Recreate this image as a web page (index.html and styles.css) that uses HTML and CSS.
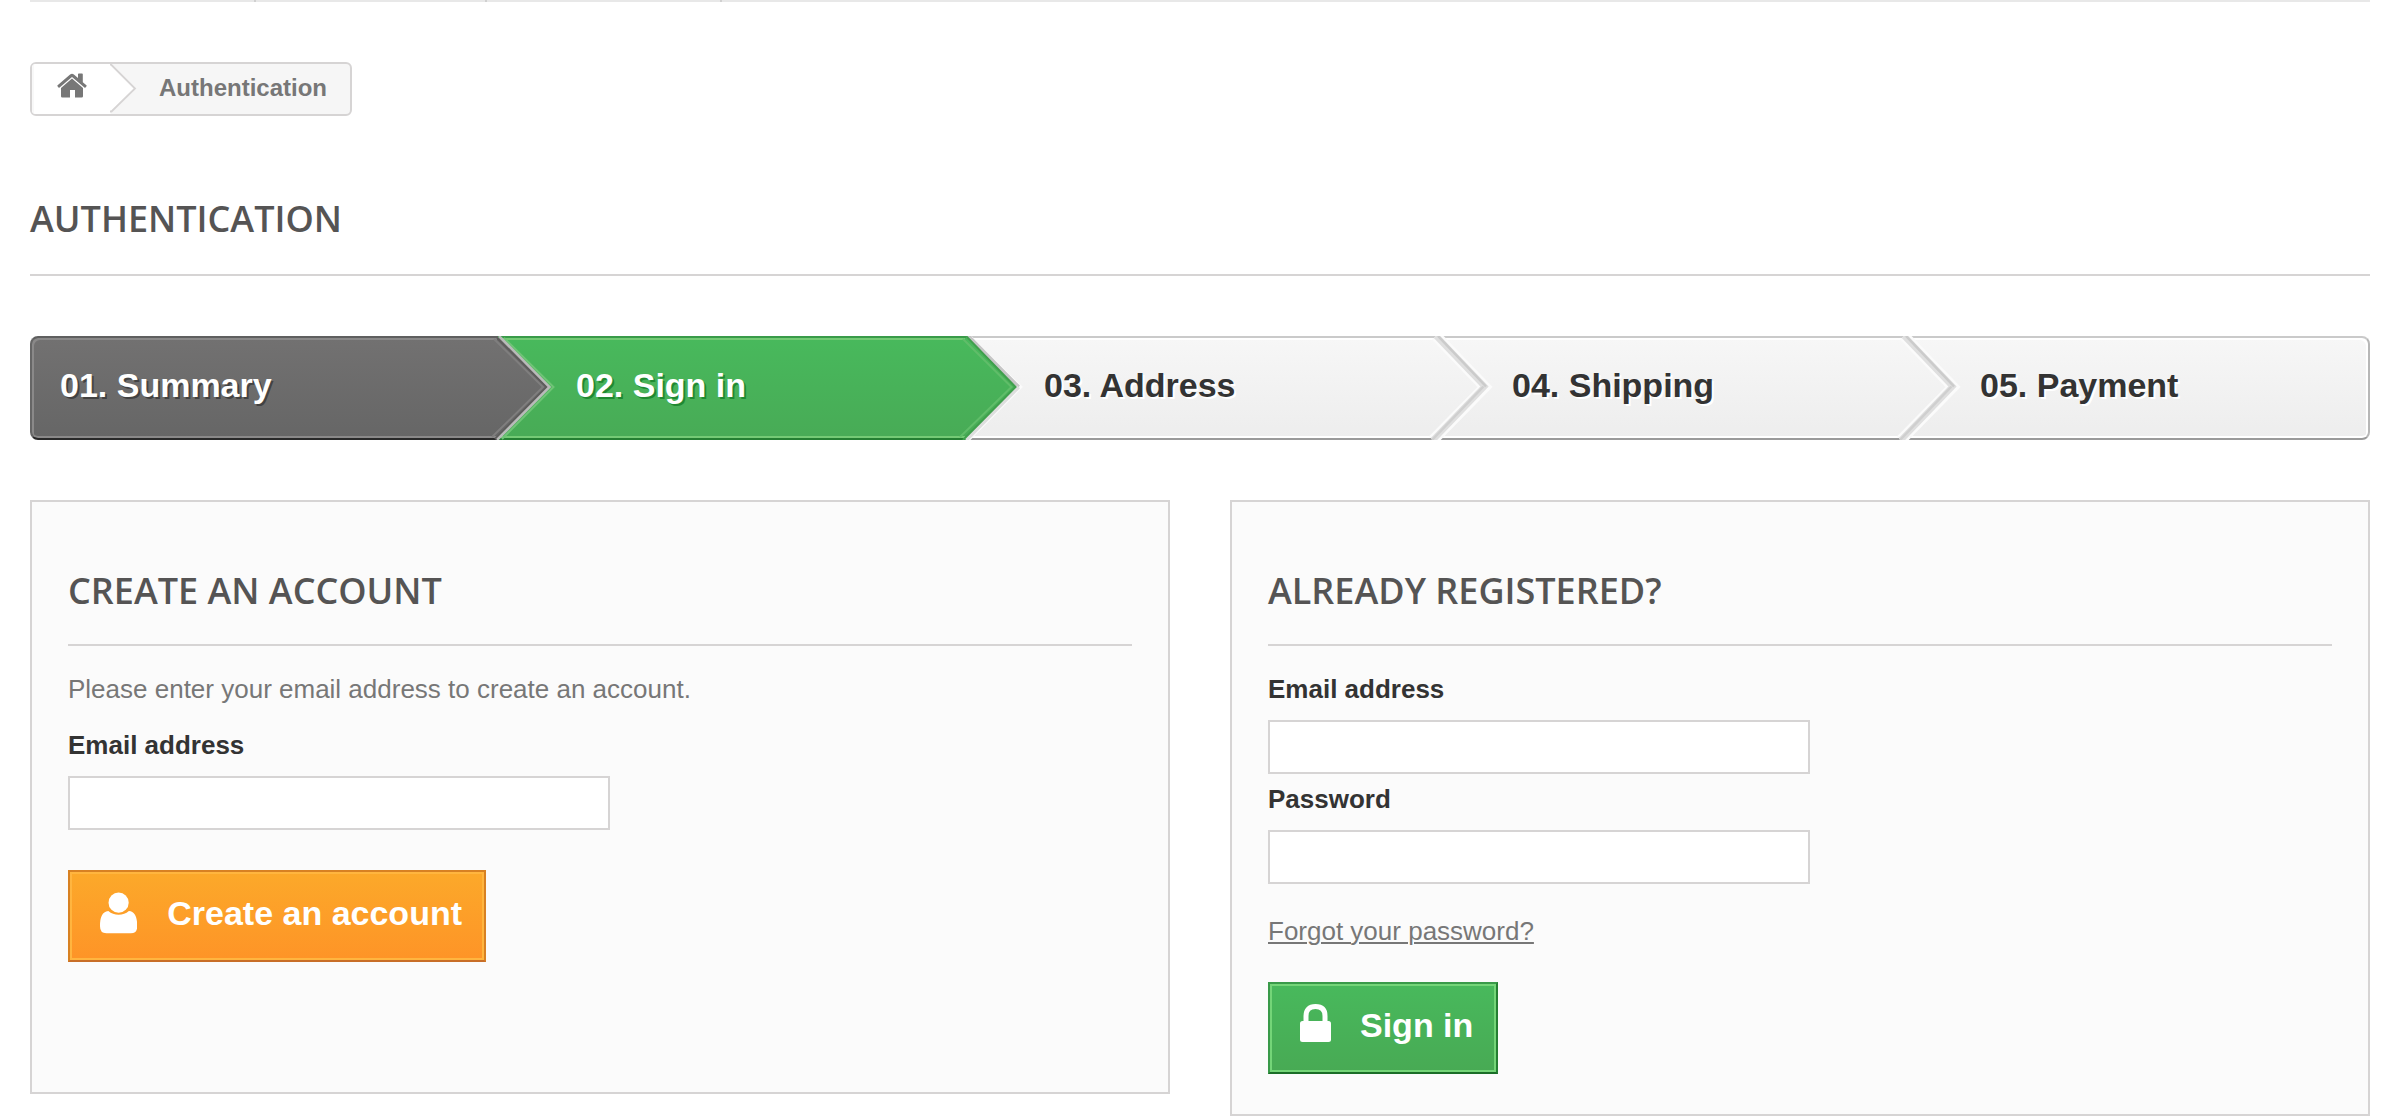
FILE: index.html
```html
<!DOCTYPE html>
<html lang="en">
<head>
<meta charset="utf-8">
<title>Authentication</title>
<link rel="stylesheet" href="styles.css">
</head>
<body>
<svg class="defs" width="0" height="0" aria-hidden="true">
  <defs>
    <linearGradient id="gray" x1="0" y1="0" x2="0" y2="1"><stop offset="0" stop-color="#727171"/><stop offset="1" stop-color="#666"/></linearGradient>
    <linearGradient id="green" x1="0" y1="0" x2="0" y2="1"><stop offset="0" stop-color="#48b95c"/><stop offset="1" stop-color="#48ab56"/></linearGradient>
    <linearGradient id="light" x1="0" y1="0" x2="0" y2="1"><stop offset="0" stop-color="#f7f7f7"/><stop offset="1" stop-color="#ededed"/></linearGradient>
  </defs>
</svg>
<div class="page">
  <div class="menu-edge"><i></i><i></i><i></i></div>
  <nav class="breadcrumb">
    <a class="home">
      <svg class="home-icon" width="30" height="25" viewBox="0 0 30 25"><path fill="#777" d="M15 5.500 26 15v8.200q0 1.300-1.300 1.300H18v-7.500h-5v7.500H5.300Q4 24.500 4 23.200V15zM.6 12.200 13.100 1.600q1.900-1.500 3.800 0L21 5.100V1.300q0-.8.800-.8H25q.8 0 .8.800v8l3.600 2.900q.6.500.1 1.100l-1 1.200q-.5.500-1.100.1L15 4 2.600 14.600q-.6.400-1.100-.1l-1-1.200q-.5-.6.100-1.100z"/></svg>
      <svg class="home-arrow" width="28" height="50" viewBox="0 0 28 50"><path fill="#fff" d="M0 0 25 24.500 0 50z"/><path fill="none" stroke="#d6d4d4" stroke-width="1.800" d="M0 .5h1L25 24.500 1.500 47.500H0"/></svg>
    </a>
    <span class="crumb">Authentication</span>
  </nav>
  <h1 class="heading">Authentication</h1>
  <ol class="steps">
    <li class="step done"><span>01. Summary</span>
      <svg class="arrow" width="72" height="104" viewBox="-12 0 72 104"><path fill="url(#gray)" d="M-1 2H2L51 51 -1 102z"/><path fill="none" stroke="#6fc476" stroke-width="2" d="M6 2 55.500 51 4 103"/><path fill="none" stroke="#7f7e7e" stroke-width="2" d="M-4 3 45 51-6 101"/><path fill="none" stroke="#5e5c5c" stroke-width="2" d="M-1 2 48.500 51-3 103"/><path fill="none" stroke="#b9bab9" stroke-width="2.500" d="M1 0 51.500 51-1 104"/></svg></li>
    <li class="step current"><span>02. Sign in</span>
      <svg class="arrow" width="72" height="104" viewBox="-12 0 72 104"><path fill="url(#green)" d="M-1 2H2L51 51-1 102z"/><path fill="none" stroke="#fbfbfb" stroke-width="2" d="M5 1 55.500 51 3 104"/><path fill="none" stroke="#c6c6c6" stroke-width="4" d="M2 0 52.500 51"/><path fill="none" stroke="#dedede" stroke-width="4" d="M52.500 51 0 104"/><path fill="none" stroke="#60bd69" stroke-width="2" d="M-3 3 45.500 51-6 101"/><path fill="none" stroke="#3f9f4c" stroke-width="2" d="M0 0 49.500 51-3 104"/></svg></li>
    <li class="step todo"><span>03. Address</span>
      <svg class="arrow" width="72" height="104" viewBox="-12 0 72 104"><path fill="url(#light)" d="M0 2H2L50 51 0 102z"/><path fill="none" stroke="#fbfbfb" stroke-width="11" d="M2 0 51 51-1 104"/><path fill="none" stroke="#dfdfdf" stroke-width="6" d="M2 0 50.500 50.500-1 104"/><path fill="none" stroke="#cbcbcb" stroke-width="2.500" d="M4 0 52 50.500"/><path fill="none" stroke="#cfcfcf" stroke-width="2.500" d="M49.500 50.500-2 104"/></svg></li>
    <li class="step todo"><span>04. Shipping</span>
      <svg class="arrow" width="72" height="104" viewBox="-12 0 72 104"><path fill="url(#light)" d="M0 2H2L50 51 0 102z"/><path fill="none" stroke="#fbfbfb" stroke-width="11" d="M2 0 51 51-1 104"/><path fill="none" stroke="#dfdfdf" stroke-width="6" d="M2 0 50.500 50.500-1 104"/><path fill="none" stroke="#cbcbcb" stroke-width="2.500" d="M4 0 52 50.500"/><path fill="none" stroke="#cfcfcf" stroke-width="2.500" d="M49.500 50.500-2 104"/></svg></li>
    <li class="step todo last"><span>05. Payment</span></li>
  </ol>
  <div class="columns">
    <form class="card create">
      <h2 class="heading">Create an account</h2>
      <p class="intro">Please enter your email address to create an account.</p>
      <label for="new-email">Email address</label>
      <input id="new-email" type="email">
      <button class="button orange" type="button">
        <svg width="38" height="42" viewBox="0 0 38 42"><circle cx="19" cy="10.500" r="10.300" fill="#fff"/><path fill="#fff" d="M8.500 19Q13 22.800 19 22.800T29.500 19C36 19.500 38 26 38 34.500Q38 41.700 31.500 41.700H6.500Q0 41.700 0 34.500C0 26 2 19.500 8.500 19z"/></svg>
        <span>Create an account</span>
      </button>
    </form>
    <form class="card login">
      <h2 class="heading">Already registered?</h2>
      <label for="email">Email address</label>
      <input id="email" type="email">
      <label for="password">Password</label>
      <input id="password" type="password">
      <a class="forgot">Forgot your password?</a>
      <button class="button green" type="button">
        <svg width="31" height="38" viewBox="0 0 31 38"><path fill="none" stroke="#fff" stroke-width="5" d="M6 18v-6Q6 2.600 15.500 2.600T25 12v6"/><rect y="17" width="31" height="21" rx="2.500" fill="#fff"/></svg>
        <span>Sign in</span>
      </button>
    </form>
  </div>
</div>
</body>
</html>
```
FILE: styles.css
```css
* { box-sizing: border-box; }
body {
  margin: 0;
  background: #fff;
  color: #777;
  font: 26px/36px "Liberation Sans", Arial, sans-serif;
}
.defs { display: block; }
.page { width: 2340px; margin: 0 auto; }
.menu-edge {
  display: flex;
  gap: 229px;
  height: 2px;
  padding-left: 224px;
  background: #e8e8e8;
}
.menu-edge i { width: 2px; background: #d0d0d0; }
.menu-edge i:last-child { margin-left: 4px; }

.breadcrumb {
  display: flex;
  width: 322px;
  height: 54px;
  margin-top: 60px;
  border: 2px solid #d6d4d4;
  border-radius: 6px;
  background: #f6f6f6;
  overflow: hidden;
  font-size: 24px;
  font-weight: bold;
  line-height: 48px;
}
.home { position: relative; width: 78px; padding: 9px 0 0 25px; background: #fff; line-height: 0; box-shadow: inset 2px 0 #f8f8f8; }
.home-arrow { position: absolute; left: 78px; top: 0; }
.crumb { margin-left: 49px; }

.heading {
  margin: 0;
  border-bottom: 2px solid #d6d4d4;
  color: #555454;
  font: 600 36px/46px "Open Sans", sans-serif;
  text-transform: uppercase;
}
h1.heading { height: 96px; margin-top: 64px; padding-top: 16px; }

.steps {
  display: grid;
  grid-template-columns: repeat(5, 1fr);
  margin: 60px 0;
  padding: 0;
  list-style: none;
}
.step {
  position: relative;
  height: 104px;
  padding-left: 78px;
  border: solid;
  border-width: 2px 0;
  font-size: 34px;
  font-weight: bold;
  line-height: 95px;
}
.done {
  padding-left: 28px;
  border-width: 2px 0 2px 2px;
  border-color: #5f5f5f #5f5f5f #292929 #666;
  border-radius: 8px 0 0 8px;
  background: linear-gradient(#727171, #666);
  box-shadow: inset 2px 2px #8a8989, inset 0 -2px #8a8989;
  color: #fff;
  text-shadow: 2px 2px rgba(0, 0, 0, .4);
}
.current {
  border-color: #399b49 #399b49 #247f32;
  background: linear-gradient(#48b95c, #48ab56);
  box-shadow: inset 0 2px #74ca75, inset 0 -2px #74ca75;
  color: #fff;
  text-shadow: 2px 2px #208931;
}
.todo {
  border-color: #cacaca #b7b7b7 #9a9a9a;
  background: linear-gradient(#f7f7f7, #ededed);
  box-shadow: inset 0 2px #fff, inset 0 -2px #fff;
  color: #333;
  text-shadow: 2px 2px #fff;
}
.last { border-width: 2px 2px 2px 0; border-radius: 0 8px 8px 0; box-shadow: inset -2px 2px #fff, inset 0 -2px #fff; }
.arrow { position: absolute; z-index: 1; left: calc(100% - 12px); top: -2px; }

.columns { display: grid; grid-template-columns: 1fr 1fr; gap: 60px; align-items: start; }
.card {
  display: flex;
  flex-direction: column;
  align-items: flex-start;
  padding: 66px 36px 0;
  border: 2px solid #d6d4d4;
  background: #fbfbfb;
}
.create { height: 594px; }
.login { height: 616px; }
.card .heading { align-self: stretch; height: 78px; }
.intro { margin: 25px 0 0; }
.card label { color: #333; font-weight: bold; }
.create label { margin-top: 20px; }
.login label { margin-top: 25px; }
.login input + label { margin-top: 7px; }
.card input {
  width: 542px;
  height: 54px;
  margin: 13px 0 0;
  border: 2px solid #d6d4d4;
  border-radius: 0;
  background: #fff;
}
.forgot { margin-top: 29px; text-decoration: underline; text-decoration-thickness: 2px; text-underline-offset: 2px; }
.button {
  display: flex;
  align-items: flex-start;
  gap: 30px;
  height: 92px;
  margin: 40px 0 0;
  padding: 20px 22px 0 30px;
  border: 2px solid;
  border-radius: 0;
  color: #fff;
  font: bold 34px/46px "Liberation Sans", Arial, sans-serif;
}
.button span { margin-top: -2px; white-space: nowrap; }
.orange { width: 418px; border-color: #d88122 #d88122 #c86e28; background: linear-gradient(#fca92a, #fe9427); box-shadow: inset 0 0 0 2px #ffb53f; }
.green { width: 230px; margin-top: 33px; border-color: #399a49 #247f32 #1a6d27 #399a49; background: linear-gradient(#48b95c, #48aa54); box-shadow: inset 0 0 0 2px #74d578; }
.green span { margin-left: -1px; }
```
